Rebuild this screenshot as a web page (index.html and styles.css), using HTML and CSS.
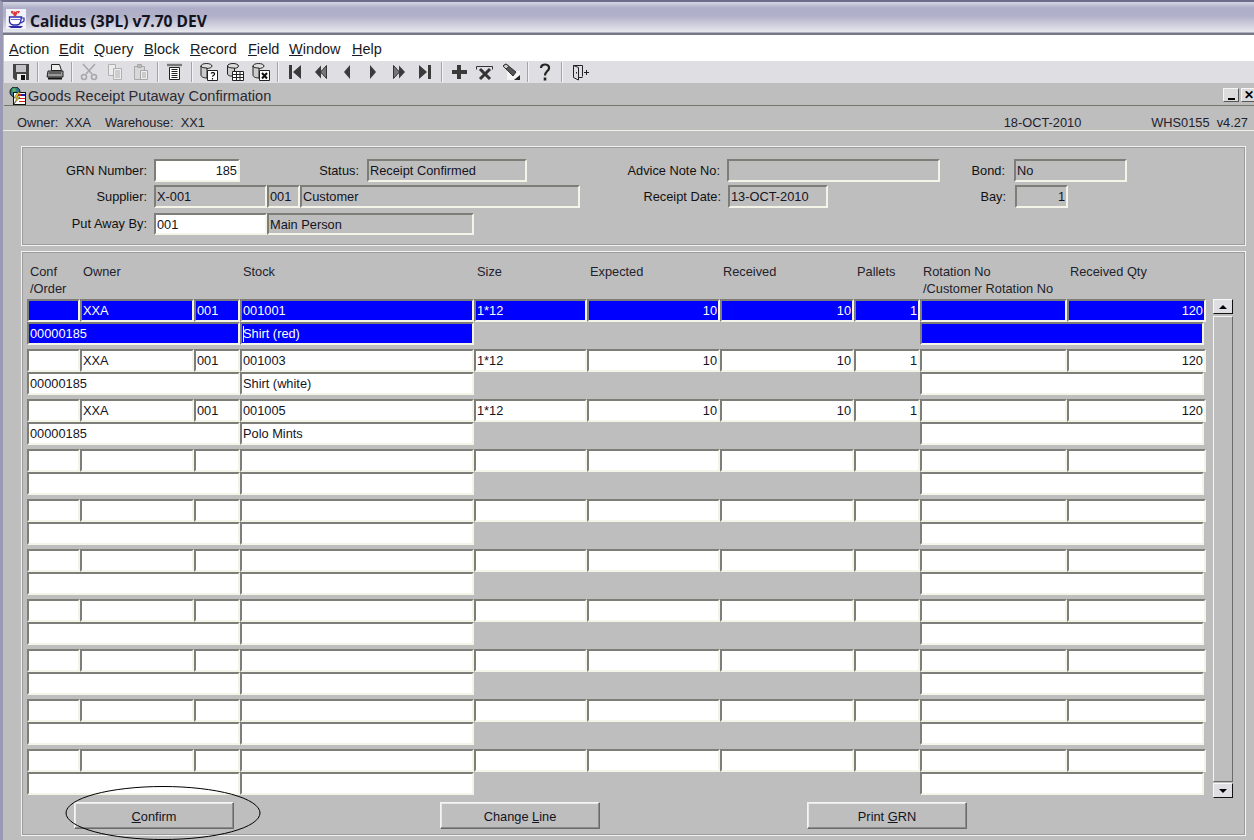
FILE: index.html
```html
<!DOCTYPE html>
<html lang="en">
<head>
<meta charset="utf-8">
<title>Calidus (3PL) v7.70 DEV</title>
<link rel="stylesheet" href="styles.css">
</head>
<body>
<div class="app">
  <header class="titlebar">
    <svg class="app-icon" viewBox="0 0 20 20" width="20" height="20" aria-hidden="true">
      <rect width="20" height="20" fill="#f2f2fa"/>
      <path d="M5 2h3l1 1 2-1h3l-1 2-2 1-1 2H8L7 5 5 4z" fill="#e03838"/>
      <path d="M7 3h1M11 4h1" stroke="#fff"/>
      <path d="M3.500 8h12l-1 5c-.5 2-2 3-4 3h-3c-2 0-3-1-4-3z" fill="#fff" stroke="#2c2ca8" stroke-width="1.300"/>
      <path d="M15 9h3v3l-3 2" fill="none" stroke="#2c2ca8" stroke-width="1.200"/>
      <path d="M5 10.500h9" stroke="#6a6ad0"/>
      <path d="M2 17h15l-2 2H5z" fill="#2c2ca8"/>
    </svg>
    <span class="app-title">Calidus (3PL) v7.70 DEV</span>
  </header>
  <div class="workspace">
    <nav class="menubar">
      <span class="menu m1"><u>A</u>ction</span>
      <span class="menu m2"><u>E</u>dit</span>
      <span class="menu m3"><u>Q</u>uery</span>
      <span class="menu m4"><u>B</u>lock</span>
      <span class="menu m5"><u>R</u>ecord</span>
      <span class="menu m6"><u>F</u>ield</span>
      <span class="menu m7"><u>W</u>indow</span>
      <span class="menu m8"><u>H</u>elp</span>
    </nav>
    <div class="toolbar">
      <span class="tool"><svg viewBox="0 0 18 18" width="18" height="18"><path d="M1 1h16v16H3l-2-2z" fill="#444"/><path d="M4 2h10v7H4z" fill="#c4c4c8"/><path d="M5 11h9v6H5z" fill="#eee"/><path d="M9 12h4v5H9z" fill="#111"/></svg></span>
      <i class="sep"></i>
      <span class="tool"><svg viewBox="0 0 18 18" width="18" height="18"><path d="M5.500 1.500h8l2 6h-10z" fill="#eee" stroke="#222"/><path d="M2 8h15l0 6H1z" fill="#999" stroke="#222"/><path d="M2 15.500h14" stroke="#111" stroke-width="2"/><path d="M3 10h12" stroke="#222"/></svg></span>
      <i class="sep"></i>
      <span class="tool"><svg viewBox="0 0 18 18" width="18" height="18" fill="none" stroke="#a8a8a8" stroke-width="1.600"><path d="M3 1l9 10M15 1L6 11"/><circle cx="4" cy="14" r="2.500"/><circle cx="14" cy="14" r="2.500"/></svg></span>
      <span class="tool"><svg viewBox="0 0 18 18" width="18" height="18" fill="#ececec" stroke="#b0b0b0"><path d="M2.500 1.500h7v11h-7z"/><path d="M7.500 5.500h8v11h-8z"/><path d="M9 8h5M9 10h5M9 12h5M9 14h5"/></svg></span>
      <span class="tool"><svg viewBox="0 0 18 18" width="18" height="18" fill="#d8d8d8" stroke="#a8a8a8"><path d="M2.500 3.500h10v13h-10z"/><path d="M5.500 1.500h4v3h-4z" fill="#bbb"/><path d="M8.500 7.500h7v9h-7z" fill="#eee"/><path d="M10 10h4M10 12h4M10 14h4"/></svg></span>
      <i class="sep"></i>
      <span class="tool"><svg viewBox="0 0 18 18" width="18" height="18" fill="none" stroke="#222"><path d="M1 2h15" stroke-width="2.400" stroke="#777"/><path d="M3.500 4.500h10v12h-10z" fill="#fff"/><path d="M5.500 6.500h6M5.500 8.500h6M5.500 10.500h6M5.500 12.500h6M5.500 14.500h6"/></svg></span>
      <i class="sep"></i>
      <span class="tool"><svg viewBox="0 0 18 18" width="18" height="18"><ellipse cx="6.500" cy="3" rx="5.500" ry="2.500" fill="#ddd" stroke="#222"/><path d="M1 3v9c0 2 3 3 6 3V5C4 5 1 4.500 1 3z" fill="#ccc" stroke="#222"/><path d="M7.500 7.500h10v10h-10z" fill="#fff" stroke="#222"/><path d="M11 10.500c1-1.500 4-1 3.500.8-.3 1-2 1-2 2.500M12.500 15v1.500" fill="none" stroke="#111" stroke-width="1.200"/></svg></span>
      <span class="tool"><svg viewBox="0 0 18 18" width="18" height="18"><ellipse cx="7" cy="3" rx="5.500" ry="2.500" fill="#ddd" stroke="#222"/><path d="M1.500 3v8c0 1 2 2 3 2h4V5C5 5 1.500 4.500 1.500 3z" fill="#ccc" stroke="#222"/><path d="M6.500 8.500h11v9h-11z" fill="#fff" stroke="#222"/><path d="M6.500 11.500h11M6.500 14.500h11M10.500 8.500v9M14 8.500v9" stroke="#222"/></svg></span>
      <span class="tool"><svg viewBox="0 0 18 18" width="18" height="18"><ellipse cx="6.500" cy="3" rx="5.500" ry="2.500" fill="#ddd" stroke="#222"/><path d="M1 3v9c0 2 3 3 6 3V5C4 5 1 4.500 1 3z" fill="#ccc" stroke="#222"/><path d="M7.500 7.500h10v10h-10z" fill="#fff" stroke="#222"/><path d="M10 10l5 5.500M15 10l-5 5.500" stroke="#111" stroke-width="2"/></svg></span>
      <i class="sep"></i>
      <span class="tool"><svg viewBox="0 0 18 18" width="18" height="18" fill="#3a3a3a"><path d="M3 2h3v14H3zM15 2v14L7 9z"/></svg></span>
      <span class="tool"><svg viewBox="0 0 18 18" width="18" height="18"><path d="M9 2.500v13L3 9z" fill="#3a3a3a"/><path d="M14.500 2.500v13L8.500 9z" fill="#777" stroke="#333"/></svg></span>
      <span class="tool"><svg viewBox="0 0 18 18" width="18" height="18" fill="#3a3a3a"><path d="M12 2v14L6 9z"/></svg></span>
      <span class="tool"><svg viewBox="0 0 18 18" width="18" height="18" fill="#3a3a3a"><path d="M6 2v14l6-7z"/></svg></span>
      <span class="tool"><svg viewBox="0 0 18 18" width="18" height="18"><path d="M3.500 2.500v13L9.500 9z" fill="#777" stroke="#333"/><path d="M9 2.500v13L15 9z" fill="#3a3a3a"/></svg></span>
      <span class="tool"><svg viewBox="0 0 18 18" width="18" height="18" fill="#3a3a3a"><path d="M3 2v14l8-7zM12 2h3v14h-3z"/></svg></span>
      <i class="sep"></i>
      <span class="tool"><svg viewBox="0 0 18 18" width="18" height="18" fill="#3a3a3a"><path d="M7 2h4v5h6v4h-6v5H7v-5H2V7h5z"/></svg></span>
      <span class="tool"><svg viewBox="0 0 18 18" width="18" height="18" fill="none" stroke="#333"><path d="M.500 6.500v-3h16v3" /><path d="M4 6l10 10M14 6L4 16" stroke-width="3"/></svg></span>
      <span class="tool"><svg viewBox="0 0 18 18" width="18" height="18"><path d="M5 8v9h13V8z" fill="#f4f4f4"/><path d="M1 3l3-2 10 8-3 4z" fill="#555" stroke="#333"/><path d="M1 3l3-2 3 2.500-3 2.500z" fill="#ccc" stroke="#333"/><path d="M12 17l6-5v5z" fill="#222"/></svg></span>
      <i class="sep"></i>
      <span class="tool"><svg viewBox="0 0 18 18" width="18" height="18" fill="none" stroke="#222" stroke-width="2.200"><path d="M5 5c0-5 9-4.500 8 .5-.6 3-4 3-4 7"/><path d="M9 14.500v3" stroke-width="2.600"/></svg></span>
      <i class="sep"></i>
      <span class="tool door"><svg viewBox="0 0 18 18" width="18" height="18" fill="none" stroke="#222"><path d="M1.500 2.500h9v11"/><path d="M1.500 2.500v12l5 2.500V4.500l-5-2"/><path d="M6.500 14.500h4M12 9.500h5M14.500 7v5"/><path d="M4.500 9v1.500" /></svg></span>
    </div>

    <div class="form-title">
      <svg class="form-icon" viewBox="0 0 17 18" width="17" height="18" aria-hidden="true">
        <circle cx="6" cy="5" r="5" fill="#2f7f96" stroke="#111"/>
        <path d="M3 2l3-1 1 3-3 2z" fill="#5cb060"/>
        <rect x="4.500" y="5.500" width="12" height="12" fill="#fff" stroke="#111"/>
        <path d="M9 7h7v2H9zM10 11h6v1h-6zM10 14h6v1h-6z" fill="#d02020"/>
        <path d="M12 7h4v2h-4z" fill="#2020b0"/>
        <path d="M9 5l-4 6h3l-3 6 6-7H8l3-5z" fill="#f4d820" stroke="#222" stroke-width=".5"/>
      </svg>
      <span class="form-name">Goods Receipt Putaway Confirmation</span>
      <span class="win-btns"><span class="win-btn"><i class="min-mark"></i></span><span class="win-btn close">✕</span></span>
    </div>
    <div class="statusline">
      <span class="st-owner">Owner:&nbsp; XXA</span>
      <span class="st-wh">Warehouse:&nbsp; XX1</span>
      <span class="st-date">18-OCT-2010</span>
      <span class="st-ver">WHS0155&nbsp; v4.27</span>
    </div>

    <main class="canvas">
      <section class="panel head-panel">
        <div class="hrow r1">
          <label class="lbl l-a">GRN Number:</label><span class="fld white num f-grn">185</span>
          <label class="lbl l-b">Status:</label><span class="fld f-status">Receipt Confirmed</span>
          <label class="lbl l-c">Advice Note No:</label><span class="fld f-advice"></span>
          <label class="lbl l-d">Bond:</label><span class="fld f-bond">No</span>
        </div>
        <div class="hrow r2">
          <label class="lbl l-a">Supplier:</label><span class="fld f-sup">X-001</span><span class="fld f-sup2">001</span><span class="fld f-cust">Customer</span>
          <label class="lbl l-c2">Receipt Date:</label><span class="fld f-date">13-OCT-2010</span>
          <label class="lbl l-d2">Bay:</label><span class="fld num f-bay">1</span>
        </div>
        <div class="hrow r3">
          <label class="lbl l-a">Put Away By:</label><span class="fld white f-sup">001</span><span class="fld f-main">Main Person</span>
        </div>
      </section>

      <section class="panel grid-panel">
        <div class="col-heads">
          <span>Conf<br>/Order</span><span>Owner</span><span></span><span>Stock</span><span>Size</span><span>Expected</span><span>Received</span><span>Pallets</span><span>Rotation No<br>/Customer Rotation No</span><span>Received Qty</span>
        </div>
        <div class="grid-wrap">
          <div class="rows">
            <div class="rec sel">
              <div class="l1"><span class="fld"></span><span class="fld">XXA</span><span class="fld">001</span><span class="fld">001001</span><span class="fld">1*12</span><span class="fld num">10</span><span class="fld num">10</span><span class="fld num">1</span><span class="fld"></span><span class="fld num">120</span></div>
              <div class="l2"><span class="fld">00000185</span><span class="fld caret-fld"><i class="caret"></i>Shirt (red)</span><span class="blank"></span><span class="fld"></span></div>
            </div>
            <div class="rec">
              <div class="l1"><span class="fld"></span><span class="fld">XXA</span><span class="fld">001</span><span class="fld">001003</span><span class="fld">1*12</span><span class="fld num">10</span><span class="fld num">10</span><span class="fld num">1</span><span class="fld"></span><span class="fld num">120</span></div>
              <div class="l2"><span class="fld">00000185</span><span class="fld">Shirt (white)</span><span class="blank"></span><span class="fld"></span></div>
            </div>
            <div class="rec">
              <div class="l1"><span class="fld"></span><span class="fld">XXA</span><span class="fld">001</span><span class="fld">001005</span><span class="fld">1*12</span><span class="fld num">10</span><span class="fld num">10</span><span class="fld num">1</span><span class="fld"></span><span class="fld num">120</span></div>
              <div class="l2"><span class="fld">00000185</span><span class="fld">Polo Mints</span><span class="blank"></span><span class="fld"></span></div>
            </div>
            <div class="rec"><div class="l1"><span class="fld"></span><span class="fld"></span><span class="fld"></span><span class="fld"></span><span class="fld"></span><span class="fld"></span><span class="fld"></span><span class="fld"></span><span class="fld"></span><span class="fld"></span></div><div class="l2"><span class="fld"></span><span class="fld"></span><span class="blank"></span><span class="fld"></span></div></div>
            <div class="rec"><div class="l1"><span class="fld"></span><span class="fld"></span><span class="fld"></span><span class="fld"></span><span class="fld"></span><span class="fld"></span><span class="fld"></span><span class="fld"></span><span class="fld"></span><span class="fld"></span></div><div class="l2"><span class="fld"></span><span class="fld"></span><span class="blank"></span><span class="fld"></span></div></div>
            <div class="rec"><div class="l1"><span class="fld"></span><span class="fld"></span><span class="fld"></span><span class="fld"></span><span class="fld"></span><span class="fld"></span><span class="fld"></span><span class="fld"></span><span class="fld"></span><span class="fld"></span></div><div class="l2"><span class="fld"></span><span class="fld"></span><span class="blank"></span><span class="fld"></span></div></div>
            <div class="rec"><div class="l1"><span class="fld"></span><span class="fld"></span><span class="fld"></span><span class="fld"></span><span class="fld"></span><span class="fld"></span><span class="fld"></span><span class="fld"></span><span class="fld"></span><span class="fld"></span></div><div class="l2"><span class="fld"></span><span class="fld"></span><span class="blank"></span><span class="fld"></span></div></div>
            <div class="rec"><div class="l1"><span class="fld"></span><span class="fld"></span><span class="fld"></span><span class="fld"></span><span class="fld"></span><span class="fld"></span><span class="fld"></span><span class="fld"></span><span class="fld"></span><span class="fld"></span></div><div class="l2"><span class="fld"></span><span class="fld"></span><span class="blank"></span><span class="fld"></span></div></div>
            <div class="rec"><div class="l1"><span class="fld"></span><span class="fld"></span><span class="fld"></span><span class="fld"></span><span class="fld"></span><span class="fld"></span><span class="fld"></span><span class="fld"></span><span class="fld"></span><span class="fld"></span></div><div class="l2"><span class="fld"></span><span class="fld"></span><span class="blank"></span><span class="fld"></span></div></div>
            <div class="rec"><div class="l1"><span class="fld"></span><span class="fld"></span><span class="fld"></span><span class="fld"></span><span class="fld"></span><span class="fld"></span><span class="fld"></span><span class="fld"></span><span class="fld"></span><span class="fld"></span></div><div class="l2"><span class="fld"></span><span class="fld"></span><span class="blank"></span><span class="fld"></span></div></div>
          </div>
          <div class="scrollbar">
            <span class="sb-btn"><i class="arrow-up"></i></span>
            <span class="sb-track"></span>
            <span class="sb-btn"><i class="arrow-down"></i></span>
          </div>
        </div>
        <div class="actions">
          <button class="btn b-confirm"><u>C</u>onfirm</button>
          <button class="btn b-change">Change <u>L</u>ine</button>
          <button class="btn b-print">Print <u>G</u>RN</button>
        </div>
      </section>
      <svg class="ellipse" viewBox="0 0 196 54" width="196" height="54" aria-hidden="true"><ellipse cx="98" cy="27" rx="97" ry="26.500" fill="none" stroke="#000" stroke-width="1"/></svg>
    </main>
  </div>
</div>
</body>
</html>
```
FILE: styles.css
```css
* { box-sizing: border-box; }
html, body { margin: 0; padding: 0; }
body {
  width: 1254px;
  height: 840px;
  overflow: hidden;
  background: #bebebe;
  font-family: "Liberation Sans", Arial, sans-serif;
  font-size: 12.800px;
  color: #111;
}
.app {
  position: relative;
  width: 1254px;
  height: 840px;
  overflow: hidden;
  border-top: 2px solid #6d6d8c;
  border-left: 3px solid #9a9ab4;
}
.titlebar {
  height: 33px;
  margin-left: -3px;
  padding: 7px 0 0 6px;
  display: flex;
  align-items: flex-start;
  gap: 4px;
  background: linear-gradient(#d6d6e4 0, #aeaec8 6px, #b0b0c9 14px, #e8e8ee 30px, #77778a 31px, #77778a 33px);
}
.app-icon { flex: none; }
.app-title {
  font-family: "Noto Sans", sans-serif;
  font-weight: 700;
  font-size: 15.600px;
  line-height: 24px;
  color: #14141e;
}
.workspace { margin-left: 1px; }
.menubar {
  height: 26px;
  background: #fff;
  position: relative;
  display: flex;
  align-items: center;
  font-size: 14.500px;
  padding-top: 2px;
  color: #1a1a22;
}
.menu { flex: none; }
.m1 { margin-left: 5px; width: 50px; }
.m2 { width: 35px; }
.m3 { width: 50px; }
.m4 { width: 46px; }
.m5 { width: 58px; }
.m6 { width: 41px; }
.m7 { width: 63px; }
.toolbar {
  height: 22px;
  background: #dfdfe3;
  display: flex;
  align-items: center;
  padding-left: 4px;
  margin-bottom: 3px;
}
.tool {
  width: 26px;
  height: 22px;
  flex: none;
  display: flex;
  align-items: center;
  justify-content: center;
}
.door { margin-left: 2px; }
.sep {
  width: 2px;
  height: 20px;
  flex: none;
  margin: 0 3px;
  background: linear-gradient(90deg, #a4a4a8 50%, #f4f4f6 50%);
}
.form-title {
  height: 20px;
  display: flex;
  align-items: center;
  background: #bebebe;
  padding-left: 5px;
  border-bottom: 1px solid #75756a;
  font-size: 14.600px;
  color: #2a2a34;
  position: relative;
}
.form-icon { flex: none; margin-right: 2px; }
.form-name { line-height: 18px; }
.win-btns {
  position: absolute;
  right: -3px;
  top: 2px;
  display: flex;
  gap: 2px;
}
.win-btn {
  width: 16px;
  height: 14px;
  background: #dcdcdc;
  border: 1px solid;
  border-color: #f4f4f4 #555 #555 #f4f4f4;
  display: flex;
  align-items: center;
  justify-content: center;
  font-size: 11px;
  font-weight: 700;
  color: #000;
  position: relative;
}
.close { justify-content: flex-start; padding-left: 2px; font-size: 12px; }
.min-mark {
  position: absolute;
  left: 4px;
  bottom: 1px;
  width: 7px;
  height: 2px;
  background: #000;
}
.statusline {
  height: 25px;
  position: relative;
  display: flex;
  align-items: center;
  padding: 9px 0 0 14px;
  border-bottom: 1px solid #f0f0e4;
  color: #22222c;
  margin-left: -1px;
}
.st-owner { width: 88px; }
.st-wh { flex: none; }
.st-date { margin-left: auto; }
.st-ver { margin-left: 70px; margin-right: 6px; }
.canvas {
  position: relative;
  padding: 15px 8px 0 17px;
}
.panel {
  border: 1px solid #f2f2f2;
  outline: 1px solid #9c9c9c;
  outline-offset: -2px;
}
.head-panel {
  height: 100px;
  padding: 12px 0 0 0;
}
.hrow {
  display: flex;
  align-items: center;
  height: 23px;
}
.r2 { margin-top: 3px; }
.r3 { margin-top: 4px; }
.r3 .fld { height: 22px; }
.lbl { flex: none; text-align: right; line-height: 16px; }
.fld {
  display: block;
  flex: none;
  height: 23px;
  padding: 2px 0 0 1px;
  border: 2px solid;
  border-color: #7e7e78 #f4f4e8 #f4f4e8 #7e7e78;
  background: transparent;
  line-height: 15px;
  white-space: nowrap;
  overflow: hidden;
  color: #14141e;
}
.white { background: #fff; }
.num { text-align: right; padding-right: 1px; }
.l-a { width: 125px; margin-right: 7px; }
.l-b { width: 119px; margin-right: 8px; }
.l-c { width: 193px; margin-right: 7px; }
.l-d { width: 65px; margin-right: 9px; }
.l-c2 { width: 141px; margin-right: 7px; }
.l-d2 { width: 178px; margin-right: 9px; }
.f-grn { width: 86px; }
.f-status { width: 160px; }
.f-advice { width: 213px; }
.f-bond { width: 113px; }
.f-sup { width: 113px; }
.f-sup2 { width: 33px; }
.f-cust { width: 280px; }
.f-date { width: 100px; }
.f-bay { width: 53px; }
.f-main { width: 207px; }
.grid-panel {
  height: 585px;
  margin-top: 5px;
  padding: 0 0 0 6px;
}
.col-heads {
  height: 47px;
  display: grid;
  grid-template-columns: 53px 114px 46px 234px 113px 133px 134px 66px 147px 138px;
  padding: 11px 0 0 2px;
  line-height: 17px;
  color: #22222c;
}
.grid-wrap { display: flex; }
.rows { width: 1179px; flex: none; margin-left: -1px; }
.rec { height: 50px; }
.l1 {
  display: grid;
  grid-template-columns: 53px 114px 46px 234px 113px 133px 134px 66px 147px 139px;
}
.l2 {
  display: grid;
  grid-template-columns: 213px 234px 446px 284px;
}
.rec .fld { background: #fff; padding-left: 1px; }
.sel .fld { background: #0000ff; color: #fff; }
.rec.sel .fld { background: #0000ff; }
.caret-fld { position: relative; }
.caret {
  position: absolute;
  left: 1px;
  top: 2px;
  width: 1px;
  height: 16px;
  background: #fff;
}
.scrollbar {
  margin-left: 7px;
  width: 20px;
  height: 499px;
  display: flex;
  flex-direction: column;
}
.sb-btn {
  height: 15px;
  flex: none;
  background: #dfdfe3;
  border: 1px solid;
  border-color: #f8f8f8 #111 #111 #f8f8f8;
  display: flex;
  align-items: center;
  justify-content: center;
}
.sb-track {
  flex: 1;
  margin: 2px 0 1px;
  background: #bebebe;
  border: 1px solid;
  border-color: #f4f4f4 #6a6a6a #6a6a6a #f4f4f4;
}
.arrow-up { border: 4px solid transparent; border-top: 0; border-bottom: 4px solid #000; width: 0; height: 0; }
.arrow-down { border: 4px solid transparent; border-bottom: 0; border-top: 4px solid #000; width: 0; height: 0; }
.actions {
  display: flex;
  padding: 3px 0 0 46px;
}
.btn {
  width: 160px;
  height: 27px;
  background: #bebebe;
  border: 1px solid;
  border-color: #f4f4f4 #6a6a6a #6a6a6a #f4f4f4;
  box-shadow: inset -1px -1px 0 #8c8c8c, inset 1px 1px 0 #e8e8e8;
  font: inherit;
  color: #14141e;
  padding: 2px 0 0;
}
.b-change { margin-left: 206px; }
.b-print { margin-left: 207px; }
.ellipse {
  position: absolute;
  left: 61px;
  top: 655px;
}
```
